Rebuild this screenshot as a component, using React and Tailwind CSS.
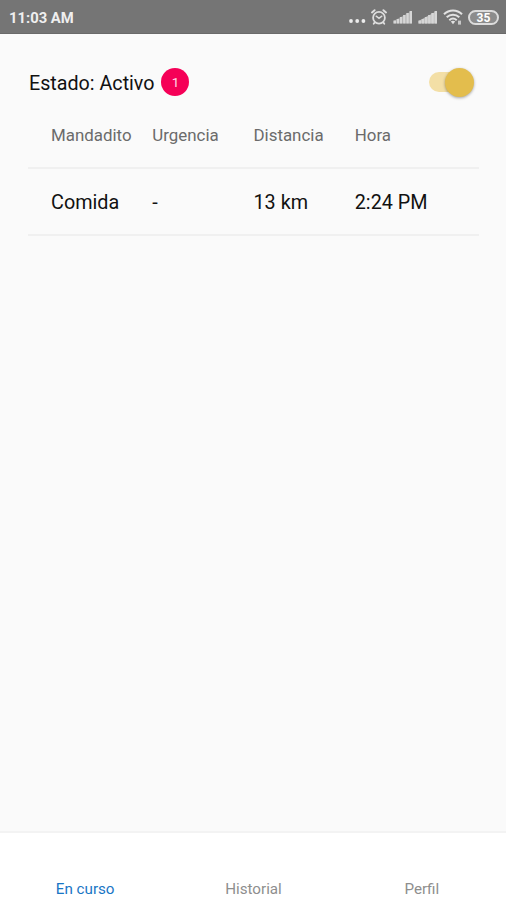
const COLUMNS = ["Mandadito", "Urgencia", "Distancia", "Hora"]

const ERRANDS = [{ id: 1, cells: ["Comida", "-", "13 km", "2:24 PM"] }]

const TABS = ["En curso", "Historial", "Perfil"]

function SignalIcon({ haze = 0.4 }) {
  return (
    <svg width="20" height="14" viewBox="0 0 20 14" fill="#d6d6d6">
      <path d="M.5 11 18.9 1v12.5H.5Z" fillOpacity={haze} />
      <rect x="0.5" y="10.5" width="2.5" height="3" />
      <rect x="3.7" y="9" width="2.5" height="4.5" />
      <rect x="6.9" y="7" width="2.5" height="6.5" />
      <rect x="10.1" y="5" width="2.5" height="8.5" />
      <rect x="13.3" y="3" width="2.5" height="10.5" />
      <rect x="16.5" y="1" width="2.5" height="12.5" />
    </svg>
  )
}

function AlarmIcon() {
  return (
    <svg width="18" height="18" viewBox="0 0 18 18" fill="none" stroke="#dedede" strokeWidth="1.8" strokeLinecap="round">
      <circle cx="9" cy="9.7" r="5.9" />
      <path d="M2 4.4 4.6 2.2M16 4.4 13.4 2.2" strokeWidth="2" />
      <path d="M6.2 8.2 9 10.3l2.8-2.1" strokeWidth="1.5" />
      <path d="M4.6 14.6 3.7 15.8M13.4 14.6l.9 1.2" />
    </svg>
  )
}

function WifiIcon() {
  return (
    <svg width="20" height="16" viewBox="0 0 20 16" fill="none" stroke="#e2e2e2" strokeWidth="2">
      <path d="M1 5.3C6 .2 14 .2 19 5.3" />
      <path d="M3.7 8.3c3.6-3.5 9-3.5 12.6 0" />
      <path d="M6.3 11.2c2.2-2 5.2-2 7.4 0" />
      <path d="M7.8 12.6 10 15.2l2.2-2.6c-1.3-1-3.1-1-4.4 0Z" fill="#e2e2e2" stroke="none" />
      <path d="M15 13.6h3" strokeWidth="4" stroke="#c8c8c8" />
    </svg>
  )
}

function StatusBar() {
  return (
    <header className="flex h-[34px] shrink-0 items-center justify-between border-b border-[#6a6a6a] bg-[#757575] pr-[7px] pl-[9px] pt-px">
      <span className="pt-0.5 text-[14.8px] font-bold text-[#efefef]">11:03 AM</span>
      <div className="flex items-center">
        <svg className="mt-2 mr-1" width="17" height="4" viewBox="0 0 17 4" fill="#ececec">
          <circle cx="2" cy="2" r="1.9" />
          <circle cx="8.2" cy="2" r="1.9" />
          <circle cx="14.4" cy="2" r="1.9" />
        </svg>
        <AlarmIcon />
        <div className="ml-[5px] flex gap-[5px]">
          <SignalIcon />
          <SignalIcon haze={0.7} />
        </div>
        <div className="ml-[5px]">
          <WifiIcon />
        </div>
        <div className="ml-[5px] flex h-[15px] w-[31px] items-center justify-center rounded-full border-2 border-[#dcdcdc] bg-[#8c8c8c] pt-px text-[12px] leading-none font-bold text-white">
          35
        </div>
      </div>
    </header>
  )
}

function ActiveSwitch() {
  return (
    <button role="switch" aria-checked="true" aria-label="Activo" className="flex h-5 w-[45px] items-center">
      <span className="flex h-5 w-9 items-center rounded-full bg-[#f3dfa6] pl-4">
        <span className="size-[29px] shrink-0 rounded-full bg-[#e3bd4d] shadow-[0_1px_3px_rgba(0,0,0,0.35)]" />
      </span>
    </button>
  )
}

export default function App() {
  return (
    <div className="flex h-[900px] w-[506px] flex-col overflow-hidden bg-[#fafafa] font-[Roboto,sans-serif]">
      <StatusBar />

      <main className="flex-1 pr-[27px] pl-7 pt-[33px]">
        <div className="flex h-[30px] items-center justify-between pr-[5px]">
          <div className="flex items-center gap-[7px] pl-px">
            <span className="pt-1 text-[19.7px] leading-6 text-[#111111]">Estado: Activo</span>
            <span className="flex size-7 items-center justify-center rounded-full bg-[#f50057] pt-px text-[13.5px] text-[#ffd9e5]">
              1
            </span>
          </div>
          <ActiveSwitch />
        </div>

        <div>
          <div className="grid h-[72px] grid-cols-4 items-center border-b-2 border-[#f0f0f0] px-[23px] pt-2">
            {COLUMNS.map((column) => (
              <span key={column} className="text-[16.9px] text-[#6b6b6b]">
                {column}
              </span>
            ))}
          </div>
          {ERRANDS.map((errand) => (
            <div key={errand.id} className="grid h-[67px] grid-cols-4 items-center border-b-2 border-[#f0f0f0] px-[23px] pt-0.5">
              {errand.cells.map((cell, idx) => (
                <span key={idx} className="text-[19.8px] text-[#111111]">
                  {cell}
                </span>
              ))}
            </div>
          ))}
        </div>
      </main>

      <nav className="grid h-[69px] shrink-0 grid-cols-3 items-end border-t-2 border-[#f3f3f3] bg-white pl-px">
        {TABS.map((tab, idx) => (
          <button
            key={tab}
            className={
              idx === 0
                ? "text-center text-[15.2px] leading-[21px] text-[#1976c5]"
                : "text-center text-[15.2px] leading-[21px] text-[#8e8e8e]"
            }
          >
            {tab}
          </button>
        ))}
      </nav>
    </div>
  )
}
